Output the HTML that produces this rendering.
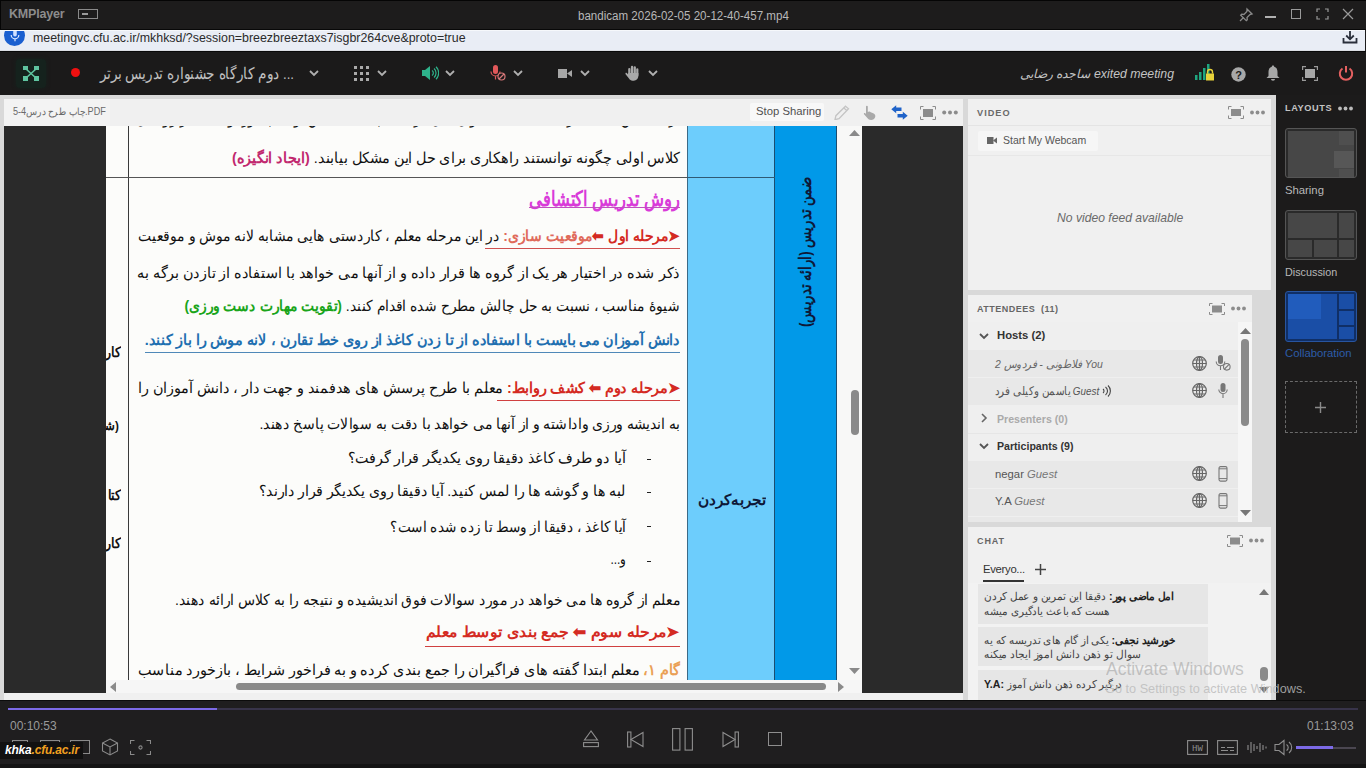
<!DOCTYPE html>
<html><head><meta charset="utf-8">
<style>
*{margin:0;padding:0;box-sizing:border-box}
html,body{width:1366px;height:768px;overflow:hidden;background:#1c1c1c;font-family:"Liberation Sans",sans-serif}
.a{position:absolute}
#title{left:0;top:0;width:1366px;height:29px;background:#1d1c1c;border-top:1px solid #000}
#url{left:0;top:29px;width:1365px;height:22px;background:#e9edf5}
#tool{left:0;top:51px;width:1366px;height:44px;background:#1c1b1b}
#main{left:0;top:95px;width:1366px;height:605px;background:#d9d9d9}
#share{left:4px;top:99px;width:959px;height:598px;background:#f0f0f0}
#pdfdarkL{left:4px;top:126px;width:102px;height:567px;background:#2a2a2a}
#pdfdarkR{left:862px;top:126px;width:101px;height:567px;background:#2a2a2a}
#page{left:106px;top:126px;width:731px;height:554px;background:#fcfcfa;overflow:hidden}
#vscroll{left:837px;top:126px;width:25px;height:554px;background:#f7f7f7}
#hscroll{left:106px;top:680px;width:756px;height:13px;background:#f7f7f7}
#video{left:968px;top:99px;width:303px;height:191px;background:#f0f0f0}
#att{left:968px;top:295px;width:284px;height:227px;background:#f0f0f0}
#chat{left:968px;top:527px;width:303px;height:173px;background:#f0f0f0}
#layouts{left:1276px;top:95px;width:90px;height:605px;background:#1c1b1b}
#player{left:0;top:700px;width:1366px;height:68px;background:#1e1e1f;border-top:1px solid #0a0a0a}
</style></head><body>
<!-- TITLE BAR -->
<div class="a" style="left:0;top:0;width:1366px;height:29px;background:#1d1c1c;border-top:1px solid #050505;border-left:1px solid #050505"></div>
<div class="a" style="left:9px;top:7px;font:bold 12.5px 'Liberation Sans',sans-serif;color:#8c8c8c;letter-spacing:-0.2px">KMPlayer</div>
<div class="a" style="left:78px;top:9px;width:20px;height:10px;border:1px solid #8a8a8a"></div>
<div class="a" style="left:82px;top:13px;width:6px;height:2px;background:#9a9a9a"></div>
<div class="a f" dir="rtl" style="left:563.0px;top:9px;width:226.0px;font:12px 'Liberation Sans',sans-serif;color:#b8b8b8;direction:ltr;white-space:pre;transform:scaleX(0.9336);transform-origin:100% 50%">bandicam 2026-02-05 20-12-40-457.mp4</div>
<svg class="a" style="left:1238px;top:7px" width="16" height="16" viewBox="0 0 16 16"><g fill="none" stroke="#8a8a8a" stroke-width="1.3"><path d="M9 2l5 5-2 .5-3 3 .3 2.2-1 1L2.7 8.2l1-1 2.2.3 3-3z"/><path d="M5.5 10.5L2 14"/></g></svg>
<div class="a" style="left:1265px;top:16px;width:11px;height:2px;background:#b0b0b0"></div>
<div class="a" style="left:1291px;top:9px;width:10px;height:10px;border:1.2px solid #9a9a9a"></div>
<svg class="a" style="left:1316px;top:8px" width="13" height="12" viewBox="0 0 13 12"><g fill="none" stroke="#9a9a9a" stroke-width="1.2"><path d="M1 4V1h3M9 1h3v3M12 8v3H9M4 11H1V8"/></g></svg>
<svg class="a" style="left:1342px;top:8px" width="12" height="12" viewBox="0 0 12 12"><path d="M1 1l10 10M11 1L1 11" stroke="#9a9a9a" stroke-width="1.2"/></svg>

<!-- URL BAR -->
<div class="a" style="left:0;top:29px;width:1366px;height:1px;background:#080808"></div>
<div class="a" style="left:0;top:30px;width:1365px;height:21px;background:#e9edf5;overflow:hidden;border-top:1px solid #f6f8fb;border-bottom:1px solid #dadde2">
  <div class="a" style="left:4px;top:-6px;width:21px;height:21px;border-radius:50%;background:#1a5fd0"></div>
  <svg class="a" style="left:9px;top:-1px" width="12" height="14" viewBox="0 0 12 14"><rect x="4.2" y="0" width="3.6" height="6.5" rx="1.8" fill="#cfe0ff"/><path d="M2.2 5a3.8 3.8 0 0 0 7.6 0M6 8.8v2.5" fill="none" stroke="#e0ebff" stroke-width="1.2"/></svg>
  <div class="a f" dir="rtl" style="left:39.0px;top:0px;width:427.0px;font:12.4px 'Liberation Sans',sans-serif;color:#2b2b2b;direction:ltr;white-space:pre;transform:scaleX(1.0141);transform-origin:100% 50%">meetingvc.cfu.ac.ir/mkhksd/?session=breezbreeztaxs7isgbr264cve&amp;proto=true</div>
  <svg class="a" style="left:1342px;top:-1px" width="16" height="15" viewBox="0 0 16 15"><g fill="none" stroke="#2a2f3a" stroke-width="1.8"><path d="M8 0v9M4.2 5.5L8 9.3 11.8 5.5"/><path d="M1.5 8v4.5h13V8"/></g></svg>
</div>

<!-- TOOLBAR -->
<div class="a" style="left:0;top:51px;width:1366px;height:44px;background:#1b1a1a;border-top:1px solid #080808"></div>
<div class="a" style="left:16px;top:59px;width:30px;height:29px;background:#15221d;border-radius:4px;box-shadow:0 0 4px #15221d"></div>
<svg class="a" style="left:23px;top:66px" width="16" height="15" viewBox="0 0 16 15"><g fill="#5fc4a0"><rect x="0" y="0" width="5" height="4"/><rect x="11" y="0" width="5" height="4"/><rect x="0" y="10" width="5" height="5"/><rect x="11" y="10" width="5" height="5"/><path d="M3 3l10 9M13 3L3 12" stroke="#5fc4a0" stroke-width="1.6"/></g></svg>
<div class="a" style="left:71px;top:68px;width:9px;height:9px;border-radius:50%;background:#f01010"></div>
<div class="a f" dir="rtl" style="left:68.0px;top:65px;width:226.0px;font:15.5px 'Liberation Sans',sans-serif;color:#c0c0c0;white-space:pre;transform:scaleX(0.8584);transform-origin:100% 50%">... دوم کارگاه جشنواره تدریس برتر</div>
<svg class="a" style="left:309px;top:70px" width="10" height="7" viewBox="0 0 10 7"><path d="M1 1l4 4 4-4" fill="none" stroke="#b0b0b0" stroke-width="1.8"/></svg>
<svg class="a" style="left:354px;top:66px" width="15" height="15" viewBox="0 0 15 15"><g fill="#aaa"><rect x="0" y="0" width="3" height="3"/><rect x="6" y="0" width="3" height="3"/><rect x="12" y="0" width="3" height="3"/><rect x="0" y="6" width="3" height="3"/><rect x="6" y="6" width="3" height="3"/><rect x="12" y="6" width="3" height="3"/><rect x="0" y="12" width="3" height="3"/><rect x="6" y="12" width="3" height="3"/><rect x="12" y="12" width="3" height="3"/></g></svg>
<svg class="a" style="left:377px;top:70px" width="10" height="7" viewBox="0 0 10 7"><path d="M1 1l4 4 4-4" fill="none" stroke="#b0b0b0" stroke-width="1.8"/></svg>
<svg class="a" style="left:422px;top:66px" width="17" height="14" viewBox="0 0 17 14"><path d="M0 4h3l5-4v14l-5-4H0z" fill="#2eb38b"/><g fill="none" stroke="#2eb38b" stroke-width="1.2"><path d="M10 4.5a3 3 0 0 1 0 5"/><path d="M12 2.5a6 6 0 0 1 0 9"/><path d="M14 0.8a8.5 8.5 0 0 1 0 12.4"/></g></svg>
<svg class="a" style="left:445px;top:70px" width="10" height="7" viewBox="0 0 10 7"><path d="M1 1l4 4 4-4" fill="none" stroke="#b0b0b0" stroke-width="1.8"/></svg>
<svg class="a" style="left:490px;top:65px" width="16" height="16" viewBox="0 0 16 16"><rect x="3" y="0" width="5" height="9" rx="2.5" fill="#e2585a"/><path d="M1 6.5a4.5 4.5 0 0 0 9 0M5.5 11v3.5" fill="none" stroke="#e2585a" stroke-width="1.2"/><circle cx="11.5" cy="11.5" r="3.5" fill="#1b1a1a" stroke="#d8787a" stroke-width="1.2"/><path d="M9 14l5-5" stroke="#d8787a" stroke-width="1.2"/></svg>
<svg class="a" style="left:513px;top:70px" width="10" height="7" viewBox="0 0 10 7"><path d="M1 1l4 4 4-4" fill="none" stroke="#b0b0b0" stroke-width="1.8"/></svg>
<svg class="a" style="left:558px;top:69px" width="14" height="9" viewBox="0 0 14 9"><rect x="0" y="0" width="9" height="9" fill="#a6a6a6"/><path d="M9 4.5L14 1v7z" fill="#a6a6a6"/></svg>
<svg class="a" style="left:580px;top:70px" width="10" height="7" viewBox="0 0 10 7"><path d="M1 1l4 4 4-4" fill="none" stroke="#b0b0b0" stroke-width="1.8"/></svg>
<svg class="a" style="left:625px;top:65px" width="16" height="16" viewBox="0 0 16 16"><g fill="#a8a8a8"><rect x="3.2" y="3" width="2.3" height="8" rx="1.1"/><rect x="5.9" y="0.8" width="2.3" height="9" rx="1.1"/><rect x="8.6" y="1.3" width="2.3" height="9" rx="1.1"/><rect x="11.2" y="3.3" width="2.2" height="8" rx="1.1"/><path d="M3.2 8h10.2v2.5c0 3-2 5.2-4.6 5.2H7.5c-1.6 0-2.6-.9-3.5-2.2L.6 9.2c-.6-.8.4-1.8 1.2-1.1L3.2 9.5z"/></g></svg>
<svg class="a" style="left:648px;top:70px" width="10" height="7" viewBox="0 0 10 7"><path d="M1 1l4 4 4-4" fill="none" stroke="#b0b0b0" stroke-width="1.8"/></svg>

<div class="a" style="left:1094px;top:67px;font:italic 12.3px 'Liberation Sans',sans-serif;color:#c4c4c4;white-space:nowrap">exited meeting</div>
<div class="a" dir="rtl" style="left:1000px;top:67px;width:90px;text-align:right;font:italic 12.3px 'Liberation Sans',sans-serif;color:#c4c4c4;white-space:nowrap">ساجده رضایی</div>
<svg class="a" style="left:1195px;top:64px" width="20" height="17" viewBox="0 0 20 17"><g fill="#1fa57f"><rect x="0" y="11" width="2.5" height="5"/><rect x="4" y="8" width="2.5" height="8"/><rect x="8" y="4" width="2.5" height="12"/><rect x="12" y="0" width="2.5" height="16"/></g><path d="M12.5 9.5v-1.5a2.5 2.5 0 0 1 5 0v1.5" fill="none" stroke="#e8d23a" stroke-width="1.4"/><rect x="11" y="9.5" width="8" height="7" fill="#e8d23a"/></svg>
<svg class="a" style="left:1231px;top:67px" width="15" height="15" viewBox="0 0 15 15"><circle cx="7.5" cy="7.5" r="7.2" fill="#a8a8a8"/><text x="7.5" y="11.5" text-anchor="middle" font-family="Liberation Sans" font-weight="bold" font-size="11" fill="#1b1a1a">?</text></svg>
<svg class="a" style="left:1266px;top:65px" width="14" height="16" viewBox="0 0 14 16"><path d="M7 0.5c.8 0 1.2.6 1.2 1.2C10.5 2.3 11.5 4.3 11.5 7v4l2 2H.5l2-2V7c0-2.7 1-4.7 3.3-5.3C5.8 1.1 6.2.5 7 .5z" fill="#a8a8a8"/><path d="M5 14a2 1.8 0 0 0 4 0z" fill="#a8a8a8"/></svg>
<svg class="a" style="left:1302px;top:66px" width="16" height="15" viewBox="0 0 16 15"><g fill="none" stroke="#9a9a9a" stroke-width="1.2"><path d="M.6 4V.6h3.4M12 .6h3.4V4M15.4 11v3.4H12M4 14.4H.6V11"/></g><rect x="3" y="3" width="10" height="9" fill="#a8a8a8"/></svg>
<svg class="a" style="left:1338px;top:65px" width="16" height="16" viewBox="0 0 16 16"><g fill="none" stroke="#e46060" stroke-width="2"><path d="M4.5 3.5a6.2 6.2 0 1 0 7 0"/><path d="M8 1v6.5"/></g></svg>
<div id="main" class="a"></div>
<!-- SHARE POD -->
<div class="a" style="left:4px;top:99px;width:959px;height:601px;background:#f0f0f0"></div>
<div class="a" style="left:4px;top:99px;width:106px;height:27px;background:#f3f3f3"></div>
<div class="a f" dir="rtl" style="left:3.0px;top:106px;width:103.0px;font:10px 'Liberation Sans',sans-serif;color:#6a6a6a;direction:ltr;white-space:pre;transform:scaleX(0.9029);transform-origin:100% 50%">چاپ طرح درس4-5.PDF</div>
<div class="a" style="left:750px;top:103px;width:74px;height:18px;background:#f8f8f8;border-radius:2px"></div>
<div class="a" style="left:756px;top:105px;font:11.3px 'Liberation Sans',sans-serif;color:#505050;white-space:nowrap">Stop Sharing</div>
<svg class="a" style="left:834px;top:105px" width="16" height="15" viewBox="0 0 16 15"><g fill="none" stroke="#c4c4c4" stroke-width="1.3"><path d="M11.5 1.2l3 2.6L5 13.6l-4 1 .9-3.9z"/><path d="M9.8 3l3 2.6"/></g></svg>
<svg class="a" style="left:863px;top:105px" width="14" height="15" viewBox="0 0 14 15"><path d="M3 1.5c0-1 1.8-1 1.8 0V7l.8-.3c.8-.3 1.6.3 1.6.3l3.5 1.5c1.5.8 1.8 2.3 1.5 3.5-.5 2-2.2 3-4 3-2.3 0-3.3-1.2-4.5-2.8L1 9.2c-.5-.7.3-1.6 1-1.1L3 9z" fill="#a9a9a9"/></svg>
<svg class="a" style="left:891px;top:105px" width="17" height="15" viewBox="0 0 17 15"><path d="M0.3 4.2L5.2 0.2V2.4H10.5V6H5.2V8.2z" fill="#1f63c9"/><path d="M16.7 10.8L11.8 6.8V9H6.5V12.6H11.8V14.8z" fill="#1f63c9"/></svg>
<svg class="a" style="left:920px;top:106px" width="16" height="14" viewBox="0 0 16 14"><g fill="none" stroke="#8c8c8c" stroke-width="1"><path d="M.5 3.5V.5h3M12.5.5h3v3M15.5 10.5v3h-3M3.5 13.5h-3v-3"/></g><rect x="3" y="3" width="10" height="8" fill="#8c8c8c"/></svg>
<svg class="a" style="left:942px;top:110px" width="16" height="5" viewBox="0 0 16 5"><g fill="#8c8c8c"><circle cx="2.2" cy="2.5" r="2"/><circle cx="8" cy="2.5" r="2"/><circle cx="13.8" cy="2.5" r="2"/></g></svg>

<div class="a" style="left:4px;top:126px;width:102px;height:567px;background:#2a2a2a"></div>
<div class="a" style="left:862px;top:126px;width:101px;height:567px;background:#2a2a2a"></div>
<div class="a" style="left:106px;top:680px;width:756px;height:13px;background:#f6f6f6"></div>
<div class="a" style="left:837px;top:126px;width:25px;height:554px;background:#f8f8f7"></div>
<svg class="a" style="left:849px;top:130px" width="11" height="6" viewBox="0 0 11 6"><path d="M0 6L5.5 0 11 6z" fill="#8a8a8a"/></svg>
<svg class="a" style="left:849px;top:668px" width="11" height="6" viewBox="0 0 11 6"><path d="M0 0L5.5 6 11 0z" fill="#8a8a8a"/></svg>
<div class="a" style="left:851px;top:390px;width:8px;height:45px;border-radius:4px;background:#8a8a8a"></div>
<svg class="a" style="left:110px;top:682px" width="6" height="10" viewBox="0 0 6 10"><path d="M6 0L0 5l6 5z" fill="#8a8a8a"/></svg>
<svg class="a" style="left:838px;top:682px" width="6" height="10" viewBox="0 0 6 10"><path d="M0 0l6 5-6 5z" fill="#8a8a8a"/></svg>
<div class="a" style="left:236px;top:683px;width:590px;height:7px;border-radius:4px;background:#888"></div>

<!-- PAGE -->
<div class="a" style="left:106px;top:126px;width:731px;height:554px;background:#fcfcfa;overflow:hidden">
  <div class="a" style="left:22px;top:0;width:1px;height:554px;background:#3a3a3a"></div>
  <div class="a" style="left:0;top:51px;width:669px;height:1px;background:#555"></div>
  <div class="a" style="left:581px;top:0;width:88px;height:554px;background:#6dcdfc;border-left:1px solid #3b6a86"></div>
  <div class="a" style="left:668px;top:0;width:63px;height:554px;background:#0199e8;border-left:1px solid #1b4d70;border-right:1px solid #1b4d70"></div>
  <div class="a" style="left:581px;top:51px;width:88px;height:1px;background:#2f5a75"></div>
</div>
<div class="a" style="left:106px;top:126px;width:731px;height:554px;overflow:hidden">
<div class="a" style="left:-106px;top:-126px;width:1366px;height:768px">
<div class="a f" dir="rtl" style="left:72.0px;top:110px;width:608.0px;font:15px 'Liberation Sans',sans-serif;color:#111;white-space:pre;transform:scaleX(0.8947);transform-origin:100% 50%">برای کلاس های دیگر تا جایی که می توان بیان کرد که بچه های کلاس اولی چطور توانستند از روی آن</div>
<div class="a f" dir="rtl" style="left:202.0px;top:149px;width:478.0px;font:15px 'Liberation Sans',sans-serif;color:#111;white-space:pre;transform:scaleX(0.9372);transform-origin:100% 50%">کلاس اولی چگونه توانستند راهکاری برای حل این مشکل بیابند. <b style="color:#c1286e">(ایجاد انگیزه)</b></div>
<div class="a f" dir="rtl" style="left:452.0px;top:187px;width:228.0px;font:bold 21px 'Liberation Sans',sans-serif;color:#d93ad9;white-space:pre;transform:scaleX(0.6623);transform-origin:100% 50%">روش تدریس اکتشافی</div>
<div class="a f" dir="rtl" style="left:73.0px;top:227px;width:607.0px;font:15px 'Liberation Sans',sans-serif;color:#111;white-space:pre;transform:scaleX(0.8929);transform-origin:100% 50%"><b style="color:#d42a22">➤مرحله اول ⬅</b><b style="color:#e06a5a">موقعیت سازی:</b> در این مرحله معلم ، کاردستی هایی مشابه لانه موش و موقعیت</div>
<div class="a f" dir="rtl" style="left:118.0px;top:264px;width:562.0px;font:15px 'Liberation Sans',sans-serif;color:#111;white-space:pre;transform:scaleX(0.9662);transform-origin:100% 50%">ذکر شده در اختیار هر یک از گروه ها قرار داده و از آنها می خواهد با استفاده از تازدن برگه به</div>
<div class="a f" dir="rtl" style="left:117.0px;top:297px;width:563.0px;font:15px 'Liberation Sans',sans-serif;color:#111;white-space:pre;transform:scaleX(0.8810);transform-origin:100% 50%">شیوهٔ مناسب ، نسبت به حل چالش مطرح شده اقدام کنند. <b style="color:#1aa51a">(تقویت مهارت دست ورزی)</b></div>
<div class="a f" dir="rtl" style="left:21.0px;top:331px;width:659.0px;font:bold 15px 'Liberation Sans',sans-serif;color:#1f6fb0;white-space:pre;transform:scaleX(0.8118);transform-origin:100% 50%">دانش آموزان می بایست با استفاده از تا زدن کاغذ از روی خط تقارن ، لانه موش را باز کنند.</div>
<div class="a f" dir="rtl" style="left:91.0px;top:379px;width:589.0px;font:15px 'Liberation Sans',sans-serif;color:#111;white-space:pre;transform:scaleX(0.9202);transform-origin:100% 50%"><b style="color:#d42a22">➤مرحله دوم ⬅ کشف روابط:</b> معلم با طرح پرسش های هدفمند و جهت دار ، دانش آموزان را</div>
<div class="a f" dir="rtl" style="left:232.0px;top:415px;width:448.0px;font:15px 'Liberation Sans',sans-serif;color:#111;white-space:pre;transform:scaleX(0.9397);transform-origin:100% 50%">به اندیشه ورزی واداشته و از آنها می خواهد با دقت به سوالات پاسخ دهند.</div>
<div class="a f" dir="rtl" style="left:334.0px;top:449px;width:292.0px;font:15px 'Liberation Sans',sans-serif;color:#111;white-space:pre;transform:scaleX(0.9521);transform-origin:100% 50%">آیا دو طرف کاغذ دقیقا روی یکدیگر قرار گرفت؟</div>
<div class="a f" dir="rtl" style="left:239.0px;top:482px;width:387.0px;font:15px 'Liberation Sans',sans-serif;color:#111;white-space:pre;transform:scaleX(0.9483);transform-origin:100% 50%">لبه ها و گوشه ها را لمس کنید. آیا دقیقا روی یکدیگر قرار دارند؟</div>
<div class="a f" dir="rtl" style="left:367.0px;top:518px;width:259.0px;font:15px 'Liberation Sans',sans-serif;color:#111;white-space:pre;transform:scaleX(0.9112);transform-origin:100% 50%">آیا کاغذ ، دقیقا از وسط تا زده شده است؟</div>
<div class="a f" dir="rtl" style="left:607.0px;top:550px;width:19.0px;font:15px 'Liberation Sans',sans-serif;color:#111;white-space:pre;transform:scaleX(0.8421);transform-origin:100% 50%">و...</div>
<div class="a" style="left:647px;top:459px;width:4px;height:1px;background:#222"></div>
<div class="a" style="left:647px;top:492px;width:4px;height:1px;background:#222"></div>
<div class="a" style="left:647px;top:526px;width:4px;height:1px;background:#222"></div>
<div class="a" style="left:647px;top:561px;width:4px;height:1px;background:#222"></div>
<div class="a f" dir="rtl" style="left:142.0px;top:591px;width:538.0px;font:15px 'Liberation Sans',sans-serif;color:#111;white-space:pre;transform:scaleX(0.9387);transform-origin:100% 50%">معلم از گروه ها می خواهد در مورد سوالات فوق اندیشیده و نتیجه را به کلاس ارائه دهند.</div>
<div class="a f" dir="rtl" style="left:404.0px;top:623px;width:276.0px;font:bold 15px 'Liberation Sans',sans-serif;color:#d42a22;white-space:pre;transform:scaleX(0.9203);transform-origin:100% 50%">➤مرحله سوم ⬅ جمع بندی توسط معلم</div>
<div class="a f" dir="rtl" style="left:110.0px;top:661px;width:570.0px;font:15px 'Liberation Sans',sans-serif;color:#111;white-space:pre;transform:scaleX(0.9509);transform-origin:100% 50%"><b style="color:#eaa055">گام ۱،</b> معلم ابتدا گفته های فراگیران را جمع بندی کرده و به فراخور شرایط ، بازخورد مناسب</div>
<div class="a" style="left:529px;top:207px;width:151px;height:1px;background:#c050c0"></div>
<div class="a" style="left:485px;top:248px;width:195px;height:1px;background:#d05050"></div>
<div class="a" style="left:145px;top:352px;width:535px;height:1px;background:#4f88b8"></div>
<div class="a" style="left:497px;top:400px;width:183px;height:1px;background:#d04040"></div>
<div class="a" style="left:425px;top:646px;width:255px;height:1px;background:#d04040"></div>
<div class="a f" dir="rtl" style="left:100.0px;top:344px;width:21.0px;font:bold 14px 'Liberation Sans',sans-serif;color:#111;white-space:pre;transform:scaleX(0.9000);transform-origin:100% 50%">کار</div>
<div class="a f" dir="rtl" style="left:94.0px;top:418px;width:25.0px;font:bold 13px 'Liberation Sans',sans-serif;color:#111;white-space:pre;transform:scaleX(0.9000);transform-origin:100% 50%">(شو</div>
<div class="a f" dir="rtl" style="left:102.0px;top:487px;width:19.0px;font:bold 14px 'Liberation Sans',sans-serif;color:#111;white-space:pre;transform:scaleX(0.9000);transform-origin:100% 50%">کتا</div>
<div class="a f" dir="rtl" style="left:100.0px;top:535px;width:21.0px;font:bold 14px 'Liberation Sans',sans-serif;color:#111;white-space:pre;transform:scaleX(0.9000);transform-origin:100% 50%">کار</div>
<div class="a f" dir="rtl" style="left:686.0px;top:491px;width:80.0px;font:bold 15px 'Liberation Sans',sans-serif;color:#0e1838;white-space:pre;transform:scaleX(0.8500);transform-origin:100% 50%">تجربه‌کردن</div>
<div class="a" dir="rtl" style="left:698px;top:240px;width:216px;height:24px;transform:rotate(-90deg) scaleX(0.78);font:bold 17px 'Liberation Sans',sans-serif;color:#0e1838;white-space:pre;text-align:center;line-height:24px">ضمن تدریس (ارائه تدریس)</div>
</div></div>
<!-- VIDEO POD -->
<div class="a" style="left:968px;top:99px;width:303px;height:191px;background:#f0f0f0"></div>
<div class="a" style="left:968px;top:125px;width:303px;height:1px;background:#e4e4e4"></div>
<div class="a" style="left:977px;top:108px;font:bold 9.2px 'Liberation Sans',sans-serif;letter-spacing:1.0px;color:#6a6a6a">VIDEO</div>
<svg class="a" style="left:1228px;top:106px" width="16" height="13" viewBox="0 0 16 13"><g fill="none" stroke="#8c8c8c" stroke-width="1"><path d="M.5 3.5V.5h3M12.5.5h3v3M15.5 9.5v3h-3M3.5 12.5h-3v-3"/></g><rect x="3" y="3" width="10" height="7" fill="#8c8c8c"/></svg>
<svg class="a" style="left:1250px;top:110px" width="15" height="5" viewBox="0 0 15 5"><g fill="#8c8c8c"><circle cx="2" cy="2.5" r="1.9"/><circle cx="7.5" cy="2.5" r="1.9"/><circle cx="13" cy="2.5" r="1.9"/></g></svg>
<div class="a" style="left:978px;top:131px;width:120px;height:20px;background:#f6f6f6;border-radius:2px"></div>
<svg class="a" style="left:987px;top:137px" width="10" height="7" viewBox="0 0 10 7"><rect x="0" y="0" width="6.5" height="7" fill="#666"/><path d="M6 3.5L10 .5v6z" fill="#666"/></svg>
<div class="a f" dir="rtl" style="left:991.0px;top:134px;width:95.0px;font:11.5px 'Liberation Sans',sans-serif;color:#555;direction:ltr;white-space:pre;transform:scaleX(0.8737);transform-origin:100% 50%">Start My Webcam</div>
<div class="a" style="left:968px;top:155px;width:303px;height:1px;background:#e7e7e7"></div>
<div class="a f" dir="rtl" style="left:1048.0px;top:210px;width:135.0px;font:italic 13px 'Liberation Sans',sans-serif;color:#6a6a6a;direction:ltr;white-space:pre;transform:scaleX(0.9333);transform-origin:100% 50%">No video feed available</div>

<!-- ATTENDEES POD -->
<div class="a" style="left:968px;top:295px;width:284px;height:227px;background:#f0f0f0;overflow:hidden">
  <div class="a" style="left:9px;top:9px;font:bold 9px 'Liberation Sans',sans-serif;letter-spacing:0.5px;color:#666;white-space:pre">ATTENDEES</div><div class="a" style="left:73px;top:9px;font:bold 9px 'Liberation Sans',sans-serif;letter-spacing:0.5px;color:#666;white-space:pre">(11)</div>
  <div class="a" style="left:0;top:27px;width:270px;height:28px;background:#efefef"></div>
  <div class="a" style="left:0;top:55px;width:270px;height:55px;background:#e8e8e8"></div>
  <div class="a" style="left:0;top:82px;width:270px;height:1px;background:#efefef"></div>
  <div class="a" style="left:0;top:110px;width:270px;height:28px;background:#efefef"></div>
  <div class="a" style="left:0;top:138px;width:270px;height:28px;background:#efefef;border-top:1px solid #e6e6e6"></div>
  <div class="a" style="left:0;top:166px;width:270px;height:61px;background:#e8e8e8"></div>
  <div class="a" style="left:0;top:193px;width:270px;height:1px;background:#efefef"></div>
  <div class="a" style="left:0;top:221px;width:270px;height:1px;background:#efefef"></div>
  <div class="a" style="left:270px;top:27px;width:14px;height:200px;background:#f6f6f6"></div>
</div>
<svg class="a" style="left:1209px;top:303px" width="16" height="12" viewBox="0 0 16 12"><g fill="none" stroke="#8c8c8c" stroke-width="1"><path d="M.5 3V.5h3M12.5.5h3V3M15.5 9v2.5h-3M3.5 11.5h-3V9"/></g><rect x="3" y="2.5" width="10" height="7" fill="#8c8c8c"/></svg>
<svg class="a" style="left:1231px;top:306px" width="15" height="5" viewBox="0 0 15 5"><g fill="#8c8c8c"><circle cx="2" cy="2.5" r="1.9"/><circle cx="7.5" cy="2.5" r="1.9"/><circle cx="13" cy="2.5" r="1.9"/></g></svg>
<svg class="a" style="left:979px;top:333px" width="10" height="7" viewBox="0 0 10 7"><path d="M1 1l4 4 4-4" fill="none" stroke="#555" stroke-width="1.8"/></svg>
<div class="a" style="left:997px;top:329px;font:bold 11.3px 'Liberation Sans',sans-serif;color:#333;white-space:pre">Hosts (2)</div>
<div class="a f" dir="rtl" style="left:983.0px;top:357px;width:120.0px;font:italic 11.5px 'Liberation Sans',sans-serif;color:#666;direction:ltr;white-space:pre;transform:scaleX(0.9000);transform-origin:100% 50%"><span dir="rtl">فلاطونی - فردوس 2</span> You</div>
<div class="a f" dir="rtl" style="left:977.0px;top:384px;width:122.0px;font:11.5px 'Liberation Sans',sans-serif;color:#555;direction:ltr;white-space:pre;transform:scaleX(0.8525);transform-origin:100% 50%"><span dir="rtl">یاسمن وکیلی فرد</span> <i>Guest</i></div>
<svg class="a" style="left:1102px;top:385px" width="9" height="12" viewBox="0 0 9 12"><g fill="none" stroke="#444" stroke-width="1.1"><path d="M1 4a2.5 2.5 0 0 1 0 4"/><path d="M3.5 2a5 5 0 0 1 0 8"/><path d="M6 .5a7.5 7.5 0 0 1 0 11"/></g></svg>
<svg class="a" style="left:981px;top:413px" width="7" height="10" viewBox="0 0 7 10"><path d="M1 1l4 4-4 4" fill="none" stroke="#666" stroke-width="1.6"/></svg>
<div class="a" style="left:997px;top:413px;font:bold 10.6px 'Liberation Sans',sans-serif;color:#aaa;white-space:pre">Presenters (0)</div>
<svg class="a" style="left:979px;top:443px" width="10" height="7" viewBox="0 0 10 7"><path d="M1 1l4 4 4-4" fill="none" stroke="#555" stroke-width="1.8"/></svg>
<div class="a" style="left:997px;top:440px;font:bold 10.6px 'Liberation Sans',sans-serif;color:#333;white-space:pre">Participants (9)</div>
<div class="a" style="left:995px;top:468px;font:11.3px 'Liberation Sans',sans-serif;color:#555;white-space:pre">negar <i style="color:#777">Guest</i></div>
<div class="a" style="left:995px;top:495px;font:11.3px 'Liberation Sans',sans-serif;color:#555;white-space:pre">Y.A <i style="color:#777">Guest</i></div>
<svg class="a" style="left:1192px;top:356px" width="15" height="15" viewBox="0 0 15 15" id="globe"><g fill="none" stroke="#666" stroke-width="1.2"><circle cx="7.5" cy="7.5" r="6.8"/><ellipse cx="7.5" cy="7.5" rx="3" ry="6.8"/><path d="M7.5 .7v13.6M.7 7.5h13.6M1.7 4h11.6M1.7 11h11.6"/></g></svg>
<svg class="a" style="left:1192px;top:383px" width="15" height="15" viewBox="0 0 15 15"><g fill="none" stroke="#666" stroke-width="1.2"><circle cx="7.5" cy="7.5" r="6.8"/><ellipse cx="7.5" cy="7.5" rx="3" ry="6.8"/><path d="M7.5 .7v13.6M.7 7.5h13.6M1.7 4h11.6M1.7 11h11.6"/></g></svg>
<svg class="a" style="left:1192px;top:466px" width="15" height="15" viewBox="0 0 15 15"><g fill="none" stroke="#666" stroke-width="1.2"><circle cx="7.5" cy="7.5" r="6.8"/><ellipse cx="7.5" cy="7.5" rx="3" ry="6.8"/><path d="M7.5 .7v13.6M.7 7.5h13.6M1.7 4h11.6M1.7 11h11.6"/></g></svg>
<svg class="a" style="left:1192px;top:493px" width="15" height="15" viewBox="0 0 15 15"><g fill="none" stroke="#666" stroke-width="1.2"><circle cx="7.5" cy="7.5" r="6.8"/><ellipse cx="7.5" cy="7.5" rx="3" ry="6.8"/><path d="M7.5 .7v13.6M.7 7.5h13.6M1.7 4h11.6M1.7 11h11.6"/></g></svg>
<svg class="a" style="left:1215px;top:355px" width="16" height="16" viewBox="0 0 16 16"><rect x="3" y="0" width="5" height="9" rx="2.5" fill="#777"/><path d="M1.2 6.5a4.3 4.3 0 0 0 8.6 0M5.5 11v4" fill="none" stroke="#777" stroke-width="1.1"/><circle cx="11.8" cy="11.8" r="3.3" fill="#e8e8e8" stroke="#777" stroke-width="1.1"/><path d="M9.5 14l4.6-4.6" stroke="#777" stroke-width="1.1"/></svg>
<svg class="a" style="left:1218px;top:383px" width="10" height="16" viewBox="0 0 10 16"><rect x="2.5" y="0" width="5" height="9" rx="2.5" fill="#777"/><path d="M.8 6.5a4.2 4.2 0 0 0 8.4 0M5 11v4" fill="none" stroke="#777" stroke-width="1.1"/></svg>
<svg class="a" style="left:1218px;top:466px" width="10" height="16" viewBox="0 0 10 16"><rect x="1" y=".6" width="8" height="14.5" rx="1.5" fill="none" stroke="#777" stroke-width="1.1"/><path d="M1 2.8h8M1 12.6h8" stroke="#777" stroke-width="1"/></svg>
<svg class="a" style="left:1218px;top:493px" width="10" height="16" viewBox="0 0 10 16"><rect x="1" y=".6" width="8" height="14.5" rx="1.5" fill="none" stroke="#777" stroke-width="1.1"/><path d="M1 2.8h8M1 12.6h8" stroke="#777" stroke-width="1"/></svg>
<svg class="a" style="left:1240px;top:328px" width="11" height="6" viewBox="0 0 11 6"><path d="M0 6L5.5 0 11 6z" fill="#777"/></svg>
<div class="a" style="left:1241px;top:339px;width:8px;height:87px;border-radius:4px;background:#8a8a8a"></div>
<svg class="a" style="left:1240px;top:510px" width="11" height="6" viewBox="0 0 11 6"><path d="M0 0L5.5 6 11 0z" fill="#777"/></svg>

<!-- CHAT POD -->
<div class="a" style="left:968px;top:527px;width:303px;height:173px;background:#f0f0f0"></div>
<div class="a" style="left:977px;top:536px;font:bold 9px 'Liberation Sans',sans-serif;letter-spacing:0.9px;color:#666">CHAT</div>
<svg class="a" style="left:1227px;top:535px" width="16" height="12" viewBox="0 0 16 12"><g fill="none" stroke="#8c8c8c" stroke-width="1"><path d="M.5 3V.5h3M12.5.5h3V3M15.5 9v2.5h-3M3.5 11.5h-3V9"/></g><rect x="3" y="2.5" width="10" height="7" fill="#8c8c8c"/></svg>
<svg class="a" style="left:1249px;top:538px" width="15" height="5" viewBox="0 0 15 5"><g fill="#8c8c8c"><circle cx="2" cy="2.5" r="1.9"/><circle cx="7.5" cy="2.5" r="1.9"/><circle cx="13" cy="2.5" r="1.9"/></g></svg>
<div class="a" style="left:983px;top:563px;font:11.3px 'Liberation Sans',sans-serif;color:#333;white-space:pre;letter-spacing:-0.3px">Everyo...</div>
<div class="a" style="left:983px;top:580px;width:41px;height:2px;background:#333"></div>
<svg class="a" style="left:1035px;top:564px" width="11" height="11" viewBox="0 0 11 11"><path d="M5.5 0v11M0 5.5h11" stroke="#444" stroke-width="1.5"/></svg>
<div class="a" style="left:968px;top:583px;width:303px;height:117px;background:#f2f2f2"></div>
<div class="a" style="left:978px;top:584px;width:230px;height:40px;background:#e6e6e6"></div>
<div class="a" style="left:978px;top:627px;width:230px;height:39px;background:#e6e6e6"></div>
<div class="a" style="left:978px;top:670px;width:230px;height:30px;background:#e6e6e6"></div>
<div class="a f" dir="rtl" style="left:963.0px;top:590px;width:211.0px;font:11.3px 'Liberation Sans',sans-serif;color:#444;white-space:pre;transform:scaleX(0.9005);transform-origin:100% 50%"><b style="color:#222">امل ماضی پور:</b> دقیقا این تمرین و عمل کردن</div>
<div class="a f" dir="rtl" style="left:977.0px;top:605px;width:133.0px;font:11.3px 'Liberation Sans',sans-serif;color:#444;white-space:pre;transform:scaleX(0.9474);transform-origin:100% 50%">هست که باعث یادگیری میشه</div>
<div class="a f" dir="rtl" style="left:963.0px;top:634px;width:213.0px;font:11.3px 'Liberation Sans',sans-serif;color:#444;white-space:pre;transform:scaleX(0.9014);transform-origin:100% 50%"><b style="color:#222">خورشید نجفی:</b> یکی از گام های تدریسه که یه</div>
<div class="a f" dir="rtl" style="left:979.0px;top:648px;width:162.0px;font:11.3px 'Liberation Sans',sans-serif;color:#444;white-space:pre;transform:scaleX(0.9691);transform-origin:100% 50%">سوال تو ذهن دانش اموز ایجاد میکنه</div>
<div class="a f" dir="rtl" style="left:976.0px;top:678px;width:146.0px;font:11.3px 'Liberation Sans',sans-serif;color:#444;white-space:pre;transform:scaleX(0.9452);transform-origin:100% 50%">درگیر کرده ذهن دانش آموز <b style="color:#222">:Y.A</b></div>
<svg class="a" style="left:1259px;top:589px" width="10" height="6" viewBox="0 0 10 6"><path d="M0 6L5 0 10 6z" fill="#777"/></svg>
<div class="a" style="left:1260px;top:667px;width:8px;height:14px;border-radius:4px;background:#8a8a8a"></div>
<svg class="a" style="left:1259px;top:687px" width="10" height="6" viewBox="0 0 10 6"><path d="M0 0L5 6 10 0z" fill="#777"/></svg>

<!-- LAYOUTS -->
<div class="a" style="left:1276px;top:95px;width:90px;height:605px;background:#1c1b1b"></div>
<div class="a" style="left:1285px;top:103px;font:bold 9.2px 'Liberation Sans',sans-serif;letter-spacing:0.6px;color:#c4c4c4">LAYOUTS</div>
<svg class="a" style="left:1338px;top:106px" width="15" height="5" viewBox="0 0 15 5"><g fill="#bbb"><circle cx="2" cy="2.5" r="1.9"/><circle cx="7.5" cy="2.5" r="1.9"/><circle cx="13" cy="2.5" r="1.9"/></g></svg>
<div class="a" style="left:1285px;top:128px;width:72px;height:50px;border:1px solid #555;border-radius:3px;background:#2a2a2a"></div>
<div class="a" style="left:1288px;top:131px;width:66px;height:46px;background:#474747"></div>
<div class="a" style="left:1339px;top:131px;width:15px;height:14px;background:#4f4f4f"></div>
<div class="a" style="left:1334px;top:151px;width:20px;height:17px;background:#575757"></div>
<div class="a" style="left:1339px;top:169px;width:15px;height:8px;background:#4f4f4f"></div>
<div class="a" style="left:1285px;top:184px;font:11.3px 'Liberation Sans',sans-serif;color:#b8b8b8">Sharing</div>
<div class="a" style="left:1285px;top:210px;width:72px;height:50px;border:1px solid #555;border-radius:3px;background:#2a2a2a"></div>
<div class="a" style="left:1288px;top:213px;width:49px;height:25px;background:#474747"></div>
<div class="a" style="left:1339px;top:213px;width:15px;height:25px;background:#474747"></div>
<div class="a" style="left:1288px;top:240px;width:24px;height:17px;background:#474747"></div>
<div class="a" style="left:1314px;top:240px;width:23px;height:17px;background:#474747"></div>
<div class="a" style="left:1339px;top:240px;width:15px;height:17px;background:#474747"></div>
<div class="a" style="left:1285px;top:266px;font:10.8px 'Liberation Sans',sans-serif;color:#b8b8b8">Discussion</div>
<div class="a" style="left:1285px;top:291px;width:72px;height:51px;border:1px solid #2855a0;border-radius:3px;background:#102f66"></div>
<div class="a" style="left:1288px;top:294px;width:49px;height:45px;background:#1a4ea6"></div>
<div class="a" style="left:1288px;top:294px;width:33px;height:25px;background:#215cbc"></div>
<div class="a" style="left:1339px;top:294px;width:15px;height:15px;background:#1a4ea6"></div>
<div class="a" style="left:1339px;top:311px;width:15px;height:14px;background:#1a4ea6"></div>
<div class="a" style="left:1339px;top:327px;width:15px;height:12px;background:#1a4ea6"></div>
<div class="a" style="left:1285px;top:347px;font:11.3px 'Liberation Sans',sans-serif;color:#2c5ca8">Collaboration</div>
<div class="a" style="left:1285px;top:381px;width:72px;height:52px;border:1px dashed #6a6a6a"></div>
<svg class="a" style="left:1315px;top:402px" width="11" height="11" viewBox="0 0 11 11"><path d="M5.5 0v11M0 5.5h11" stroke="#8a8a8a" stroke-width="1.4"/></svg>
<!-- PLAYER -->
<div class="a" style="left:0;top:700px;width:1366px;height:68px;background:#1f1e1f;border-top:1px solid #0c0c0c"></div>
<div class="a" style="left:0;top:764px;width:1366px;height:4px;background:#141414"></div>
<div class="a" style="left:8px;top:708px;width:1350px;height:2px;background:#38344a"></div>
<div class="a" style="left:8px;top:708px;width:209px;height:2px;background:#7c6ae6"></div>
<div class="a" style="left:10px;top:719px;font:12px 'Liberation Sans',sans-serif;color:#9a9a9a">00:10:53</div>
<div class="a" style="left:1307px;top:719px;font:12px 'Liberation Sans',sans-serif;color:#9a9a9a">01:13:03</div>
<!-- left icons -->
<div class="a" style="left:12px;top:740px;width:16px;height:14px;border:1.2px solid #8a8a8a"></div>
<div class="a" style="left:40px;top:740px;width:20px;height:14px;border:1.2px solid #8a8a8a"></div>
<div class="a" style="left:70px;top:740px;width:20px;height:14px;border:1.2px solid #8a8a8a"></div>
<svg class="a" style="left:101px;top:738px" width="18" height="18" viewBox="0 0 18 18"><g fill="none" stroke="#8a8a8a" stroke-width="1.1"><path d="M9 1l7.5 4v8L9 17 1.5 13V5z"/><path d="M1.5 5L9 9l7.5-4M9 9v8"/></g></svg>
<svg class="a" style="left:130px;top:740px" width="21" height="15" viewBox="0 0 21 15"><g fill="none" stroke="#8a8a8a" stroke-width="1.1"><path d="M.5 4V.5h4M16.5.5h4V4M20.5 11v3.5h-4M4.5 14.5h-4V11"/><circle cx="10.5" cy="7.5" r="1.6"/></g></svg>
<div class="a" style="left:0;top:742px;width:83px;height:17px;background:#111"></div>
<div class="a" style="left:5px;top:743px;font:italic bold 12px 'Liberation Sans',sans-serif;color:#fff;white-space:pre;letter-spacing:-0.2px">khka<span style="color:#f0a020">.cfu.ac.ir</span></div>
<!-- center controls -->
<svg class="a" style="left:583px;top:730px" width="16" height="18" viewBox="0 0 16 18"><g fill="none" stroke="#8e8e8e" stroke-width="1.1"><path d="M8 1L1.5 10h13z"/><rect x=".6" y="12.6" width="14.8" height="4"/></g></svg>
<svg class="a" style="left:627px;top:731px" width="17" height="17" viewBox="0 0 17 17"><g fill="none" stroke="#8e8e8e" stroke-width="1.1"><rect x=".6" y="1" width="3.3" height="15"/><path d="M16 1.5v14L4 8.5z"/></g></svg>
<svg class="a" style="left:672px;top:728px" width="22" height="23" viewBox="0 0 22 23"><g fill="none" stroke="#8e8e8e" stroke-width="1.1"><rect x=".6" y=".6" width="7.3" height="21.5"/><rect x="13.1" y=".6" width="7.3" height="21.5"/></g></svg>
<svg class="a" style="left:722px;top:731px" width="17" height="17" viewBox="0 0 17 17"><g fill="none" stroke="#8e8e8e" stroke-width="1.1"><rect x="13.1" y="1" width="3.3" height="15"/><path d="M1 1.5v14L13 8.5z"/></g></svg>
<div class="a" style="left:768px;top:732px;width:14px;height:14px;border:1.1px solid #8e8e8e"></div>
<!-- right controls -->
<svg class="a" style="left:1187px;top:740px" width="21" height="15" viewBox="0 0 21 15"><rect x=".6" y=".6" width="19.8" height="13.8" fill="none" stroke="#8e8e8e" stroke-width="1.1"/><text x="10.5" y="11" text-anchor="middle" font-family="Liberation Mono" font-size="9" fill="#8e8e8e">HW</text></svg>
<svg class="a" style="left:1217px;top:740px" width="21" height="15" viewBox="0 0 21 15"><g fill="none" stroke="#8e8e8e" stroke-width="1.1"><rect x=".6" y=".6" width="19.8" height="13.8"/><path d="M4 7.5h4M10 7.5h7M4 10.5h7M13 10.5h4"/></g></svg>
<svg class="a" style="left:1247px;top:740px" width="20" height="15" viewBox="0 0 20 15"><g stroke="#8e8e8e" stroke-width="1.1"><path d="M1 5v5M4 2v11M7 4v7M10 6v3M13 3v9M16 5v5M19 6.5v2"/></g></svg>
<svg class="a" style="left:1274px;top:739px" width="19" height="17" viewBox="0 0 19 17"><g fill="none" stroke="#8e8e8e" stroke-width="1.1"><path d="M1 5.5h4L10 1.5v14l-5-4H1z"/><path d="M12.5 5.5a3.5 3.5 0 0 1 0 6"/><path d="M15 3a7 7 0 0 1 0 11"/></g></svg>
<div class="a" style="left:1296px;top:747px;width:60px;height:2px;background:#4a4650"></div>
<div class="a" style="left:1296px;top:746px;width:37px;height:3px;background:#7c6ae6"></div>

<!-- Activate Windows watermark -->
<div class="a f" dir="rtl" style="left:1102.0px;top:659px;width:142.0px;font:17.6px 'Liberation Sans',sans-serif;color:rgba(150,150,150,0.5);direction:ltr;white-space:pre;transform:scaleX(0.9718);transform-origin:100% 50%">Activate Windows</div>
<div class="a f" dir="rtl" style="left:1097.0px;top:682px;width:209.0px;font:12.6px 'Liberation Sans',sans-serif;color:rgba(187,187,187,0.83);direction:ltr;white-space:pre;transform:scaleX(0.9617);transform-origin:100% 50%">Go to Settings to activate Windows.</div>
<script>(function(){var D=[[789.0, 211.0], [466.0, 433.0], [294.0, 194.0], [106.0, 93.0], [680.0, 544.0], [680.0, 448.0], [680.0, 151.0], [680.0, 542.0], [680.0, 543.0], [680.0, 496.0], [680.0, 535.0], [680.0, 542.0], [680.0, 421.0], [626.0, 278.0], [626.0, 367.0], [626.0, 236.0], [626.0, 16.0], [680.0, 505.0], [680.0, 254.0], [680.0, 542.0], [121.0, -0.9], [119.0, -0.9], [121.0, -0.9], [121.0, -0.9], [766.0, 68.0], [1086.0, 83.0], [1183.0, 126.0], [1103.0, 108.0], [1099.0, 104.0], [1174.0, 190.0], [1110.0, 126.0], [1176.0, 192.0], [1141.0, 157.0], [1122.0, 138.0], [1244.0, 138.0], [1306.0, 201.0]];var E=document.querySelectorAll(".f");if(E.length!==D.length)return;for(var i=0;i<E.length;i++){var e=E[i];e.style.width="auto";var w=e.offsetWidth;if(!w)continue;var r=D[i][0],t=D[i][1];var sc=t<0?-t:t/w;e.style.left=(r-w)+"px";e.style.width=w+"px";e.style.transform="scaleX("+sc.toFixed(4)+")";}})();</script>
</body></html>
